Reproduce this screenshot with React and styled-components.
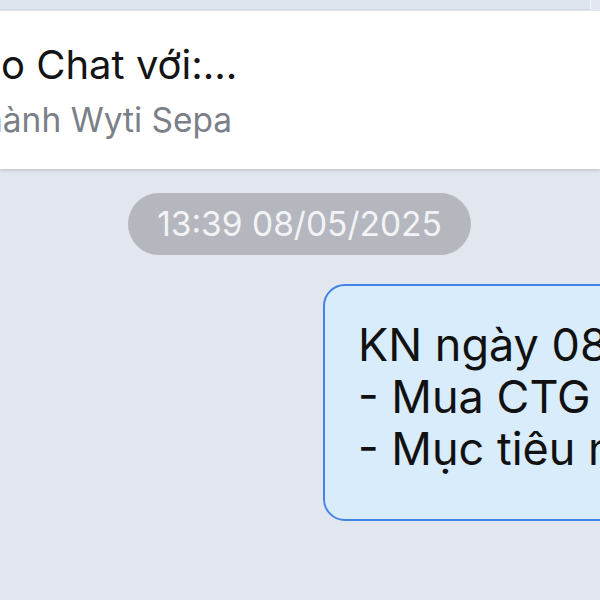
import React from 'react'
import styled, { createGlobalStyle } from 'styled-components'

const Global = createGlobalStyle`
  html, body {
    margin: 0;
    padding: 0;
    background: #e2e6ef;
    overflow: hidden;
  }
  body {
    font-family: Inter, "Noto Sans", sans-serif;
  }
`

const Screen = styled.div`
  width: 600px;
  height: 600px;
  overflow: hidden;
  background: #e2e6ef;
  display: flex;
  flex-direction: column;
`

const TopStrip = styled.div`
  height: 9px;
  width: 590px;
  background: #dfe5ee;
  border-bottom: 1px solid #d3d9e2;
  border-right: 1px solid #f4f6fa;
  flex-shrink: 0;
`

const Header = styled.div`
  margin-top: 1px;
  height: 158px;
  box-sizing: border-box;
  padding-top: 30px;
  background: #ffffff;
  box-shadow: 0 2px 3px rgba(0, 0, 0, 0.12);
  display: flex;
  flex-direction: column;
  gap: 11px;
  overflow: hidden;
  flex-shrink: 0;
`

const Title = styled.div`
  font-size: 40px;
  line-height: 48px;
  color: #141414;
  white-space: nowrap;
  margin-left: ${p => p.$shift}px;
`

const Sub = styled.div`
  font-size: 33.5px;
  line-height: 40px;
  color: #7b7f88;
  white-space: nowrap;
  margin-left: ${p => p.$shift}px;
`

const Feed = styled.div`
  display: flex;
  flex-direction: column;
  padding-top: 24px;
`

const StampRow = styled.div`
  display: flex;
  justify-content: center;
  width: 600px;
`

const Stamp = styled.div`
  height: 62px;
  width: 343px;
  border-radius: 31px;
  background: #b4b7bd;
  color: #f2f3f5;
  font-size: 33.5px;
  display: flex;
  align-items: center;
  justify-content: center;
  box-sizing: border-box;
  margin-left: -1px;
`

const MsgRow = styled.div`
  display: flex;
  padding-left: 323px;
  margin-top: 29px;
`

const Bubble = styled.div`
  width: 360px;
  height: 237px;
  flex-shrink: 0;
  box-sizing: border-box;
  border: 2px solid #4283e8;
  border-radius: 22px;
  background: #d8ecfb;
  padding: 33px 0 0 33px;
  font-size: 45px;
  line-height: 52px;
  color: #111111;
  white-space: nowrap;
  overflow: hidden;
`

export default function App() {
  return (
    <Screen>
      <Global />
      <TopStrip />
      <Header>
        <Title $shift={1}>o Chat với:...</Title>
        <Sub $shift={-17}>hành Wyti Sepa</Sub>
      </Header>
      <Feed>
        <StampRow>
          <Stamp>13:39 08/05/2025</Stamp>
        </StampRow>
        <MsgRow>
          <Bubble>
            KN ngày 08/05/2025
            <br />- Mua CTG giá 38
            <br />- Mục tiêu ngắn hạn
          </Bubble>
        </MsgRow>
      </Feed>
    </Screen>
  )
}
